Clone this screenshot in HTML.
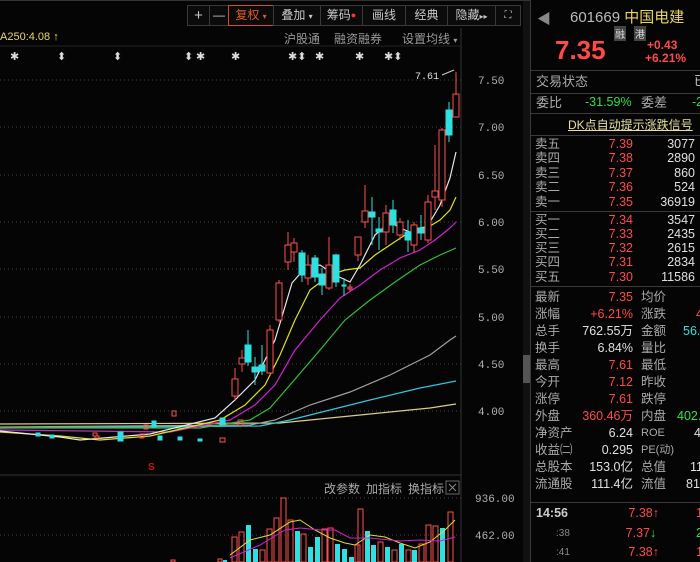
<!DOCTYPE html>
<html><head><meta charset="utf-8"><style>
*{margin:0;padding:0;box-sizing:border-box}
body{width:700px;height:562px;background:#050505;overflow:hidden;position:relative;font-family:"Liberation Sans","Noto Sans CJK SC",sans-serif;font-size:12px;color:#c8c8c8}
.a{position:absolute;white-space:nowrap}
.btn{position:absolute;top:5px;height:21px;border:1px solid #3a3a3a;color:#c8c8c8;font-size:12px;line-height:19px;text-align:center;background:#0b0b0b}
.r{color:#ff4a4a}.g{color:#2ee04a}.y{color:#e8d860}.w{color:#e0e0e0}.c{color:#30e0e0}
.row{position:absolute;left:530px;width:170px;height:15px;font-size:12.5px;line-height:15px}
.row span{position:absolute}
.hl{position:absolute;left:530px;width:170px;height:1px;background:#3a3a3a}
</style></head><body>
<svg class="a" style="left:0;top:0" width="530" height="562">
<g stroke="#444" stroke-dasharray="1,3" stroke-width="1">
<line x1="0" y1="80" x2="461" y2="80"/><line x1="0" y1="127" x2="461" y2="127"/><line x1="0" y1="175" x2="461" y2="175"/><line x1="0" y1="222" x2="461" y2="222"/><line x1="0" y1="269" x2="461" y2="269"/><line x1="0" y1="317" x2="461" y2="317"/><line x1="0" y1="364" x2="461" y2="364"/><line x1="0" y1="411" x2="461" y2="411"/>
<line x1="0" y1="498" x2="461" y2="498"/><line x1="0" y1="535" x2="461" y2="535"/>
</g>
<line x1="461" y1="28" x2="461" y2="562" stroke="#333"/>
<line x1="0" y1="475" x2="461" y2="475" stroke="#333"/>
<line x1="0" y1="46" x2="461" y2="46" stroke="#222"/>
<rect x="523" y="0" width="7" height="562" fill="#111"/>
<rect x="523" y="355" width="7" height="28" fill="#555"/>
<g fill="none" stroke-width="1.2">
<polyline stroke="#d8cf8a" points="0,424 280,423 330,418 380,413 430,408 456,404"/>
<polyline stroke="#30c8e0" points="0,428 260,426 290,420 330,410 370,400 420,388 456,381"/>
<polyline stroke="#a0a0a0" points="0,427 250,425 275,420 310,405 350,392 390,375 430,355 450,340 456,336"/>
<polyline stroke="#30c030" points="0,428 200,428 250,420 270,408 290,385 320,350 345,320 370,300 395,282 420,265 440,255 456,248"/>
<polyline stroke="#d020d0" points="0,430 170,432 230,420 255,405 275,385 295,350 320,320 340,298 360,285 380,270 400,258 420,250 435,240 450,228 456,222"/>
<polyline stroke="#e0e020" points="0,432 60,436 100,440 150,436 220,420 245,405 265,385 280,355 295,320 310,290 330,275 345,270 360,268 375,255 390,245 405,235 420,228 430,226 440,220 450,210 456,197"/>
<polyline stroke="#e8e8e8" points="0,431 60,437 80,440 150,434 215,418 235,400 255,380 275,340 292,283 305,268 320,265 335,275 350,282 360,265 375,235 390,222 400,228 410,232 420,232 430,222 440,205 450,178 456,152"/>
</g>
<g stroke-width="1">
<g fill="#30e0e0" stroke="#30e0e0"><rect x="36" y="433" width="4" height="3"/><rect x="50" y="435" width="4" height="3"/><rect x="118" y="432" width="5" height="9"/><rect x="158" y="436" width="4" height="4"/><rect x="178" y="437" width="4" height="3"/><rect x="198" y="439" width="4" height="2"/><rect x="152" y="421" width="4" height="6"/><rect x="220" y="418" width="5" height="7"/></g>
<g fill="none" stroke="#ff5050"><rect x="93" y="433" width="4" height="3"/><rect x="140" y="434" width="4" height="4"/><rect x="220" y="438" width="5" height="4"/><rect x="95" y="436" width="4" height="2"/><rect x="144" y="425" width="4" height="4"/><rect x="172" y="411" width="4" height="5"/><rect x="238" y="420" width="5" height="5"/></g>
<g fill="none" stroke="#ff5050">
<line x1="235" y1="368" x2="235" y2="400"/><rect x="232" y="379" width="6" height="17" fill="#050505"/>
<line x1="242" y1="350" x2="242" y2="372"/><rect x="239" y="358" width="6" height="6" fill="#050505"/>
<line x1="270" y1="325" x2="270" y2="375"/><rect x="267" y="330" width="6" height="43" fill="#050505"/>
<line x1="279" y1="280" x2="279" y2="322"/><rect x="276" y="283" width="6" height="37" fill="#050505"/>
<line x1="288" y1="232" x2="288" y2="270"/><rect x="285" y="245" width="6" height="17" fill="#050505"/>
<line x1="294" y1="238" x2="294" y2="262"/><rect x="291" y="243" width="6" height="9" fill="#050505"/>
<line x1="308" y1="255" x2="308" y2="285"/><rect x="305" y="265" width="6" height="13" fill="#050505"/>
<line x1="329" y1="237" x2="329" y2="290"/><rect x="326" y="265" width="6" height="23" fill="#050505"/>
<line x1="350" y1="284" x2="350" y2="291"/><rect x="348" y="287" width="4" height="2"/>
<line x1="358" y1="237" x2="358" y2="261"/><rect x="355" y="237" width="6" height="18" fill="#050505"/>
<line x1="365" y1="185" x2="365" y2="228"/><rect x="362" y="211" width="6" height="11" fill="#050505"/>
<line x1="386" y1="205" x2="386" y2="245"/><rect x="383" y="213" width="6" height="19" fill="#050505"/>
<line x1="400" y1="218" x2="400" y2="240"/><rect x="397" y="222" width="6" height="13" fill="#050505"/>
<line x1="414" y1="222" x2="414" y2="253"/><rect x="411" y="225" width="6" height="20" fill="#050505"/>
<line x1="428" y1="195" x2="428" y2="243"/><rect x="425" y="202" width="6" height="38" fill="#050505"/>
<line x1="435" y1="145" x2="435" y2="210"/><rect x="432" y="191" width="6" height="6" fill="#050505"/>
<line x1="442" y1="128" x2="442" y2="207"/><rect x="439" y="130" width="6" height="70" fill="#050505"/>
<line x1="456" y1="72" x2="456" y2="94"/><rect x="453" y="94" width="6" height="23" fill="#050505"/>
</g>
<g fill="#30e0e0" stroke="#30e0e0">
<line x1="248" y1="330" x2="248" y2="366"/><rect x="245" y="345" width="6" height="17"/>
<line x1="255" y1="357" x2="255" y2="385"/><rect x="252" y="367" width="6" height="5"/>
<line x1="262" y1="345" x2="262" y2="375"/><rect x="259" y="365" width="6" height="6"/>
<line x1="302" y1="250" x2="302" y2="282"/><rect x="299" y="253" width="6" height="22"/>
<line x1="315" y1="255" x2="315" y2="282"/><rect x="312" y="258" width="6" height="19"/>
<line x1="322" y1="268" x2="322" y2="295"/><rect x="319" y="274" width="6" height="11"/>
<line x1="336" y1="254" x2="336" y2="287"/><rect x="333" y="255" width="6" height="27"/>
<line x1="344" y1="278" x2="344" y2="296"/><rect x="342" y="285" width="4" height="1"/>
<line x1="372" y1="197" x2="372" y2="245"/><rect x="369" y="212" width="6" height="5"/>
<line x1="379" y1="217" x2="379" y2="250"/><rect x="376" y="229" width="6" height="3"/>
<line x1="393" y1="200" x2="393" y2="233"/><rect x="390" y="210" width="6" height="15"/>
<line x1="408" y1="220" x2="408" y2="252"/><rect x="405" y="232" width="6" height="8"/>
<line x1="421" y1="215" x2="421" y2="240"/><rect x="418" y="228" width="6" height="5"/>
<line x1="449" y1="102" x2="449" y2="142"/><rect x="446" y="110" width="6" height="25"/>
</g>
</g>
<text x="415" y="79" fill="#e0e0e0" font-size="10" font-family="Liberation Mono">7.61</text>
<line x1="442" y1="75" x2="454" y2="70" stroke="#ccc"/>
<text x="148" y="470" fill="#d01010" font-size="10" font-weight="bold">S</text>
<g stroke-width="1">
<g fill="none" stroke="#ff5050">
<rect x="171" y="560" width="4" height="2"/><rect x="218" y="559" width="4" height="3"/><rect x="232" y="537" width="5" height="25"/><rect x="239" y="532" width="5" height="30"/><rect x="260" y="550" width="5" height="12"/><rect x="267" y="529" width="5" height="33"/><rect x="274" y="518" width="5" height="44"/><rect x="281" y="498" width="5" height="64"/><rect x="288" y="520" width="5" height="42"/><rect x="301" y="534" width="5" height="28"/><rect x="322" y="529" width="5" height="33"/><rect x="328" y="528" width="5" height="34"/><rect x="355" y="545" width="5" height="17"/><rect x="358" y="509" width="5" height="53"/><rect x="378" y="542" width="5" height="20"/><rect x="392" y="550" width="5" height="12"/><rect x="406" y="550" width="5" height="12"/><rect x="419" y="544" width="5" height="18"/><rect x="426" y="525" width="5" height="37"/><rect x="433" y="526" width="5" height="36"/><rect x="448" y="512" width="5" height="50"/>
</g>
<g fill="#30e0e0">
<rect x="223" y="560" width="4" height="2"/><rect x="246" y="525" width="5" height="37"/><rect x="253" y="549" width="5" height="13"/><rect x="295" y="531" width="5" height="31"/><rect x="308" y="547" width="5" height="15"/><rect x="315" y="537" width="5" height="25"/><rect x="335" y="544" width="5" height="18"/><rect x="342" y="549" width="5" height="13"/><rect x="349" y="557" width="5" height="5"/><rect x="365" y="531" width="5" height="31"/><rect x="371" y="545" width="5" height="17"/><rect x="385" y="547" width="5" height="15"/><rect x="399" y="544" width="5" height="18"/><rect x="412" y="550" width="5" height="12"/><rect x="440" y="528" width="5" height="34"/>
</g>
<polyline fill="none" stroke="#e0e020" points="230,555 250,540 270,535 290,522 300,520 315,530 330,538 345,543 355,545 370,535 385,537 400,543 415,548 430,542 445,530 455,520"/>
<polyline fill="none" stroke="#d020d0" points="230,558 260,545 285,530 300,528 320,530 335,530 350,538 370,538 400,541 420,540 440,541 455,537"/>
</g>
<g fill="#b0b0b0" font-size="11" font-family="Liberation Mono">
<text x="478" y="84">7.50</text><text x="478" y="131">7.00</text><text x="478" y="179">6.50</text><text x="478" y="226">6.00</text><text x="478" y="273">5.50</text><text x="478" y="321">5.00</text><text x="478" y="368">4.50</text><text x="478" y="415">4.00</text>
<text x="475" y="502">936.00</text><text x="475" y="539">462.00</text>
</g>
<rect x="446" y="481" width="13" height="13" fill="none" stroke="#666"/>
<path d="M449 484 L456 491 M456 484 L449 491" stroke="#888"/>
<g fill="#ddd" font-size="11"><text x="10" y="60">✱</text><text x="57" y="60">⬍</text><text x="113" y="60">⬍</text><text x="184" y="60">⬍</text><text x="196" y="60">✱</text><text x="231" y="60">✱</text><text x="288" y="60">✱⬍</text><text x="315" y="60">✱</text><text x="355" y="60">✱</text><text x="384" y="60">✱⬍</text></g>
</svg>
<div class="a" style="left:0;top:0;width:530px;height:1px;background:#333"></div>
<div class="btn" style="left:187px;width:23px;font-size:15px">+</div>
<div class="btn" style="left:209px;width:20px">—</div>
<div class="btn" style="left:228px;width:46px;border-color:#d05020;color:#e05a20">复权 <span style="font-size:8px">▾</span></div>
<div class="btn" style="left:273px;width:48px">叠加 <span style="font-size:8px">▾</span></div>
<div class="btn" style="left:320px;width:43px">筹码<span style="color:#f33;font-size:9px;vertical-align:top">●</span></div>
<div class="btn" style="left:362px;width:44px">画线</div>
<div class="btn" style="left:405px;width:43px">经典</div>
<div class="btn" style="left:447px;width:49px">隐藏<span style="font-size:8px">▸▸</span></div>
<div class="btn" style="left:495px;width:26px;font-size:10px">⛶</div>
<div class="a y" style="left:0;top:31px;font-size:11px">A250:4.08 ↑</div>
<div class="a" style="left:284px;top:30px;color:#999">沪股通</div>
<div class="a" style="left:334px;top:30px;color:#999">融资融券</div>
<div class="a" style="left:402px;top:30px;color:#999">设置均线 <span style="font-size:8px">▾</span></div>
<div class="a" style="left:324px;top:480px;color:#aaa">改参数</div>
<div class="a" style="left:366px;top:480px;color:#aaa">加指标</div>
<div class="a" style="left:408px;top:480px;color:#aaa">换指标</div>

<div class="a" style="left:530px;top:0;width:1px;height:562px;background:#3a3a3a"></div>
<div class="a" style="left:537px;top:9px;color:#888;font-size:14px">◀</div>
<div class="a" style="left:570px;top:6px;font-size:15px;color:#bbb">601669 <span class="y">中国电建</span></div>
<div class="a" style="left:614px;top:26px;font-size:10px;background:#444;color:#ddd;padding:0 1px">融</div>
<div class="a" style="left:634px;top:26px;font-size:10px;background:#444;color:#ddd;padding:0 1px">港</div>
<div class="a r" style="left:555px;top:35px;font-size:26px;font-weight:bold">7.35</div>
<div class="a r" style="left:647px;top:38px;font-size:12px;font-weight:bold">+0.43</div>
<div class="a r" style="left:645px;top:51px;font-size:12px;font-weight:bold">+6.21%</div>
<div class="hl" style="top:70px"></div>
<div class="row" style="top:74px"><span style="left:6px;color:#aaa;font-size:13px">交易状态</span><span style="left:164px;color:#ccc">已</span></div>
<div class="hl" style="top:93px"></div>
<div class="row" style="top:95px"><span style="left:6px;color:#aaa;font-size:13px">委比</span><span class="g" style="left:55px">-31.59%</span><span style="left:111px;color:#aaa;font-size:13px">委差</span><span class="g" style="left:162px">-2</span></div>
<div class="hl" style="top:113px"></div>
<div class="row" style="top:118px"><span style="left:38px;color:#e8e0a0;text-decoration:underline;font-size:12px">DK点自动提示涨跌信号</span></div>
<div class="hl" style="top:135px"></div>
<div class="row" style="top:137px"><span style="left:5px;color:#aaa">卖五</span><span class="r" style="right:67px">7.39</span><span class="w" style="right:5px">3077</span></div>
<div class="row" style="top:151px"><span style="left:5px;color:#aaa">卖四</span><span class="r" style="right:67px">7.38</span><span class="w" style="right:5px">2890</span></div>
<div class="row" style="top:166px"><span style="left:5px;color:#aaa">卖三</span><span class="r" style="right:67px">7.37</span><span class="w" style="right:5px">860</span></div>
<div class="row" style="top:180px"><span style="left:5px;color:#aaa">卖二</span><span class="r" style="right:67px">7.36</span><span class="w" style="right:5px">524</span></div>
<div class="row" style="top:195px"><span style="left:5px;color:#aaa">卖一</span><span class="r" style="right:67px">7.35</span><span class="w" style="right:5px">36919</span></div>
<div class="hl" style="top:211px"></div>
<div class="row" style="top:213px"><span style="left:5px;color:#aaa">买一</span><span class="r" style="right:67px">7.34</span><span class="w" style="right:5px">3547</span></div>
<div class="row" style="top:227px"><span style="left:5px;color:#aaa">买二</span><span class="r" style="right:67px">7.33</span><span class="w" style="right:5px">2435</span></div>
<div class="row" style="top:241px"><span style="left:5px;color:#aaa">买三</span><span class="r" style="right:67px">7.32</span><span class="w" style="right:5px">2615</span></div>
<div class="row" style="top:255px"><span style="left:5px;color:#aaa">买四</span><span class="r" style="right:67px">7.31</span><span class="w" style="right:5px">2834</span></div>
<div class="row" style="top:270px"><span style="left:5px;color:#aaa">买五</span><span class="r" style="right:67px">7.30</span><span class="w" style="right:5px">11586</span></div>
<div class="hl" style="top:286px"></div>
<div class="row" style="top:290px"><span style="left:5px;color:#aaa">最新</span><span class="r" style="right:67px">7.35</span><span style="left:111px;color:#aaa">均价</span></div>
<div class="row" style="top:307px"><span style="left:5px;color:#aaa">涨幅</span><span class="r" style="right:67px">+6.21%</span><span style="left:111px;color:#aaa">涨跌</span><span class="r" style="left:166px">4</span></div>
<div class="row" style="top:324px"><span style="left:5px;color:#aaa">总手</span><span class="w" style="right:67px">762.55万</span><span style="left:111px;color:#aaa">金额</span><span class="c" style="left:153px">56.</span></div>
<div class="row" style="top:341px"><span style="left:5px;color:#aaa">换手</span><span class="w" style="right:67px">6.84%</span><span style="left:111px;color:#aaa">量比</span></div>
<div class="row" style="top:358px"><span style="left:5px;color:#aaa">最高</span><span class="r" style="right:67px">7.61</span><span style="left:111px;color:#aaa">最低</span></div>
<div class="row" style="top:375px"><span style="left:5px;color:#aaa">今开</span><span class="r" style="right:67px">7.12</span><span style="left:111px;color:#aaa">昨收</span></div>
<div class="row" style="top:392px"><span style="left:5px;color:#aaa">涨停</span><span class="r" style="right:67px">7.61</span><span style="left:111px;color:#aaa">跌停</span></div>
<div class="row" style="top:409px"><span style="left:5px;color:#aaa">外盘</span><span class="r" style="right:67px">360.46万</span><span style="left:111px;color:#aaa">内盘</span><span class="g" style="left:147px">402.</span></div>
<div class="row" style="top:426px"><span style="left:5px;color:#aaa">净资产</span><span class="w" style="right:67px">6.24</span><span style="left:111px;color:#aaa;font-size:11px">ROE</span><span class="w" style="left:164px">4</span></div>
<div class="row" style="top:443px"><span style="left:5px;color:#aaa">收益㈡</span><span class="w" style="right:67px">0.295</span><span style="left:111px;color:#aaa;font-size:11px">PE(动)</span></div>
<div class="row" style="top:460px"><span style="left:5px;color:#aaa">总股本</span><span class="w" style="right:67px">153.0亿</span><span style="left:111px;color:#aaa">总值</span><span class="w" style="left:160px">11</span></div>
<div class="row" style="top:477px"><span style="left:5px;color:#aaa">流通股</span><span class="w" style="right:67px">111.4亿</span><span style="left:111px;color:#aaa">流值</span><span class="w" style="left:156px">81</span></div>
<div class="hl" style="top:502px"></div>
<div class="row" style="top:506px"><span style="left:6px;color:#ccc;font-weight:bold">14:56</span><span class="r" style="right:41px">7.38↑</span><span class="r" style="left:166px">1</span></div>
<div class="row" style="top:526px"><span style="left:26px;color:#888;font-size:10px">:38</span><span class="r" style="right:50px">7.37</span><span class="g" style="left:120px">↓</span><span class="g" style="left:166px">2</span></div>
<div class="row" style="top:545px"><span style="left:26px;color:#888;font-size:10px">:41</span><span class="r" style="right:41px">7.38↑</span><span class="r" style="left:166px">1</span></div>
</body></html>
